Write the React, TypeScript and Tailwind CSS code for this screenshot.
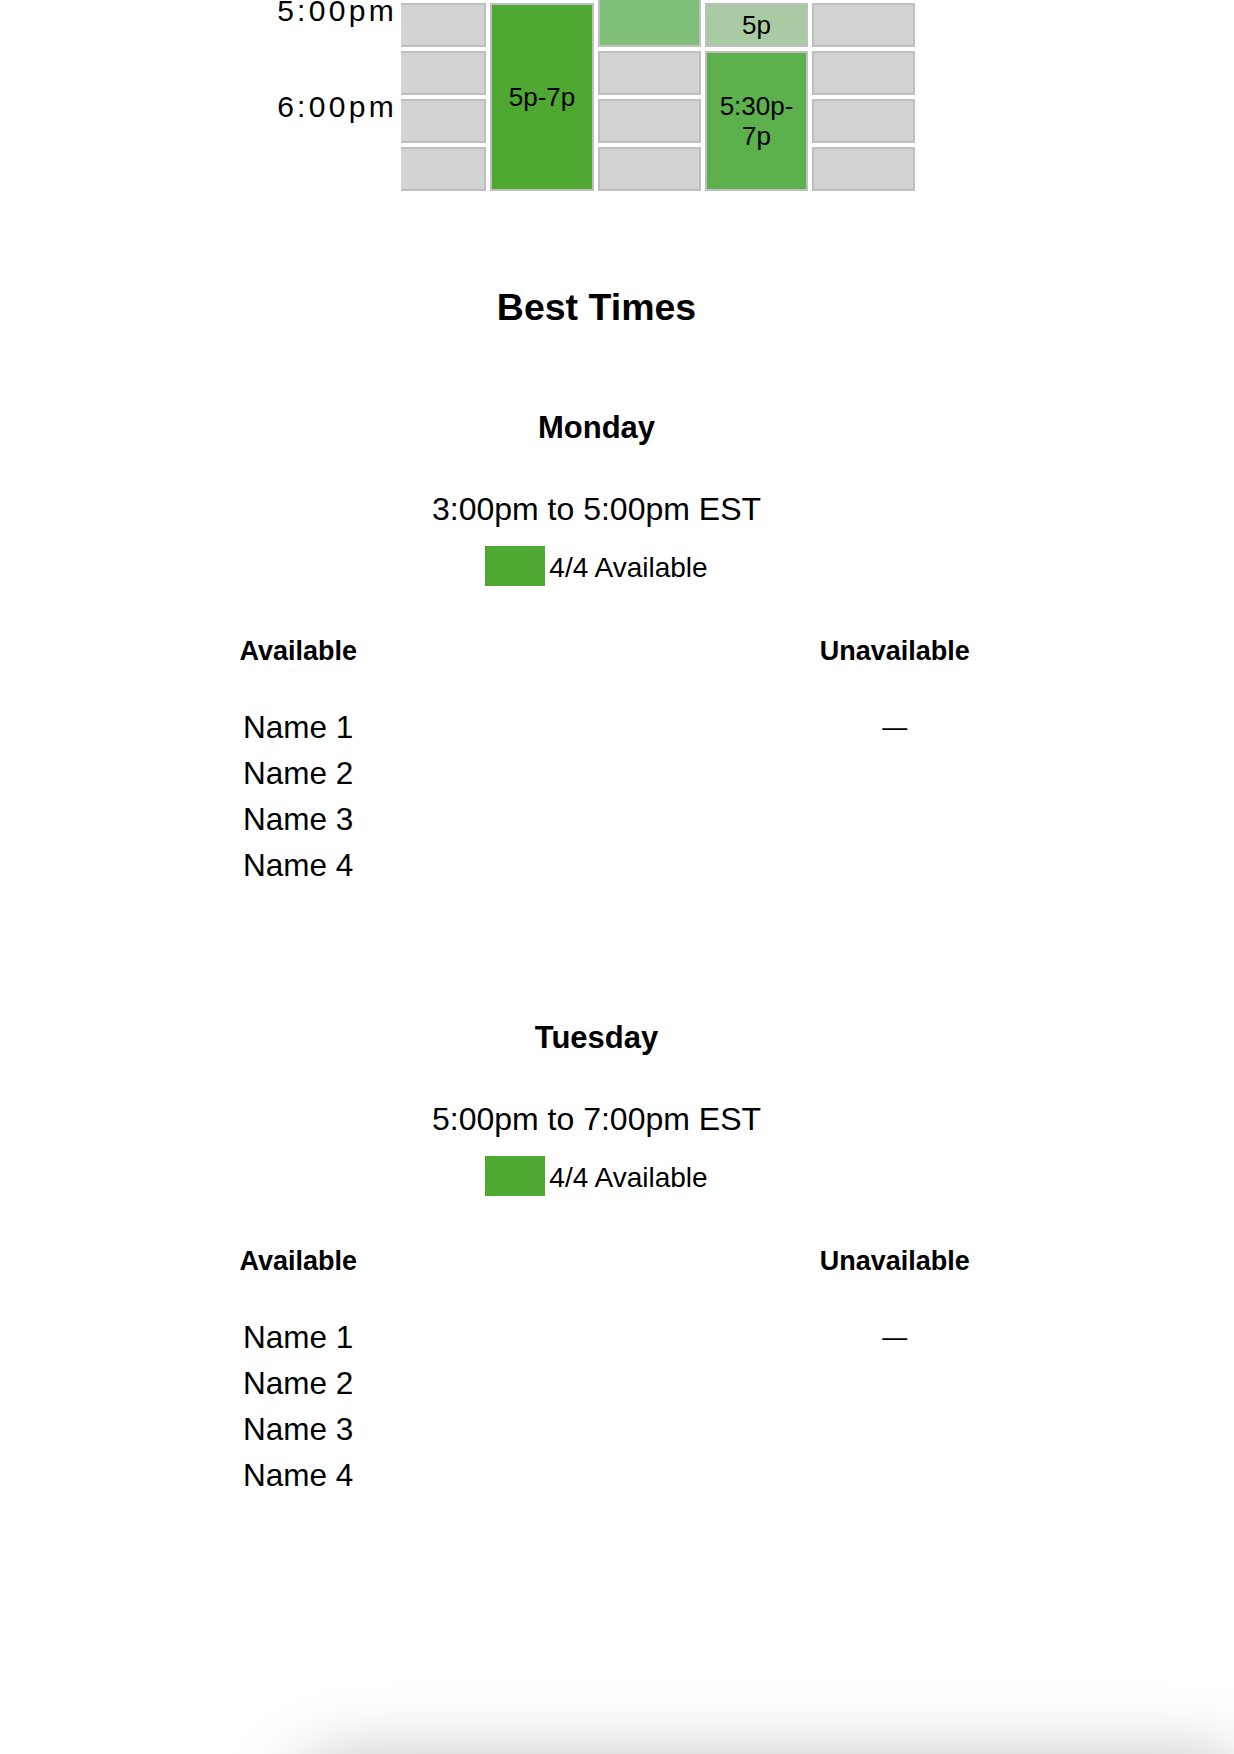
import React from 'react';

type Slot = { id: string; kind: 'empty' | 'block'; rows: number; color?: string; label?: string; clipTop?: boolean };

// columns of the availability grid (each slot spans N half-hour rows)
const columnas: { width: string; clipLeft?: boolean; slots: Slot[] }[] = [
  {
    width: 'w-[85px]',
    clipLeft: true,
    slots: [
      { id: 'a1', kind: 'empty', rows: 1 },
      { id: 'a2', kind: 'empty', rows: 1 },
      { id: 'a3', kind: 'empty', rows: 1 },
      { id: 'a4', kind: 'empty', rows: 1 },
    ],
  },
  {
    width: 'w-[104px]',
    slots: [{ id: 'b1', kind: 'block', rows: 4, color: 'bg-[#4fa832]', label: '5p-7p' }],
  },
  {
    width: 'w-[103px]',
    slots: [
      { id: 'c1', kind: 'block', rows: 1, color: 'bg-[#80bf7a]', clipTop: true },
      { id: 'c2', kind: 'empty', rows: 1 },
      { id: 'c3', kind: 'empty', rows: 1 },
      { id: 'c4', kind: 'empty', rows: 1 },
    ],
  },
  {
    width: 'w-[103px]',
    slots: [
      { id: 'd1', kind: 'block', rows: 1, color: 'bg-[#a9cba4]', label: '5p' },
      { id: 'd2', kind: 'block', rows: 3, color: 'bg-[#5cb14c]', label: '5:30p-7p' },
    ],
  },
  {
    width: 'w-[103px]',
    slots: [
      { id: 'e1', kind: 'empty', rows: 1 },
      { id: 'e2', kind: 'empty', rows: 1 },
      { id: 'e3', kind: 'empty', rows: 1 },
      { id: 'e4', kind: 'empty', rows: 1 },
    ],
  },
];

const alturas: Record<number, string> = {
  1: 'h-[44px]',
  3: 'h-[140px]',
  4: 'h-[188px]',
};

const mejores = [
  { dia: 'Monday', rango: '3:00pm to 5:00pm EST', disponibles: ['Name 1', 'Name 2', 'Name 3', 'Name 4'] },
  { dia: 'Tuesday', rango: '5:00pm to 7:00pm EST', disponibles: ['Name 1', 'Name 2', 'Name 3', 'Name 4'] },
];

function Grid() {
  return (
    <div className="flex ml-[257px] gap-[4px]">
      {/* hour labels */}
      <div className="w-[140px] -mt-[4px] flex flex-col text-right text-[30px] leading-[30px] tracking-[3.3px] text-black">
        <div className="h-[96px]">5:00pm</div>
        <div className="h-[96px]">6:00pm</div>
      </div>
      {columnas.map((col, i) => (
        <div key={i} className={`${col.width} pt-[3px] flex flex-col gap-[4px]`}>
          {col.slots.map((s) => (
            <div
              key={s.id}
              className={[
                'border-2 border-[#bfbfbf] flex items-center justify-center text-center text-[26px] leading-[30px] text-black',
                s.kind === 'empty' ? 'bg-[#d3d3d3]' : s.color,
                s.clipTop ? 'border-t-0 -mt-[3px] h-[47px]' : alturas[s.rows],
                col.clipLeft ? 'border-l-0' : '',
              ].join(' ')}
            >
              {s.label && <span className="px-2">{s.label}</span>}
            </div>
          ))}
        </div>
      ))}
    </div>
  );
}

function DiaMejor({ dia, rango, disponibles }: { dia: string; rango: string; disponibles: string[] }) {
  return (
    <div className="w-full flex flex-col items-center">
      <h3 className="text-[31px] leading-[30px] font-bold">{dia}</h3>
      <p className="mt-[50px] text-[32px] leading-[32px]">{rango}</p>
      <div className="mt-[21px] flex items-center gap-[4px] h-[40px]">
        <div className="w-[60px] h-[40px] bg-[#4fa832]" />
        <span className="text-[28px] leading-[28px] pt-[3px]">4/4 Available</span>
      </div>
      <div className="w-full grid grid-cols-2 mt-[53px]">
        <div className="flex flex-col items-center">
          <div className="text-[27px] leading-[25px] font-bold">Available</div>
          <ul className="mt-[40px] flex flex-col items-start">
            {disponibles.map((n) => (
              <li key={n} className="text-[31.5px] leading-[46px]">{n}</li>
            ))}
          </ul>
        </div>
        <div className="flex flex-col items-center">
          <div className="text-[27px] leading-[25px] font-bold">Unavailable</div>
          <div className="mt-[40px] text-[25px] leading-[46px]">—</div>
        </div>
      </div>
    </div>
  );
}

export default function App() {
  return (
    <div className="h-[1754px] overflow-hidden bg-white text-black font-['Liberation_Sans',Arial,sans-serif]">
      <div className="w-[1193px]">
        <Grid />
        <div className="flex flex-col items-center">
          <h2 className="mt-[98px] text-[37.5px] leading-[37px] font-bold">Best Times</h2>
          <div className="mt-[87px] w-full flex flex-col gap-[135px]">
            {mejores.map((m) => (
              <DiaMejor key={m.dia} {...m} />
            ))}
          </div>
        </div>
      </div>
      {/* panel asomando por debajo */}
      <div className="mt-[260px] ml-[290px] h-[200px] bg-white rounded-tl-[60px] shadow-[0_0_70px_rgba(0,0,0,0.25)]" />
    </div>
  );
}
